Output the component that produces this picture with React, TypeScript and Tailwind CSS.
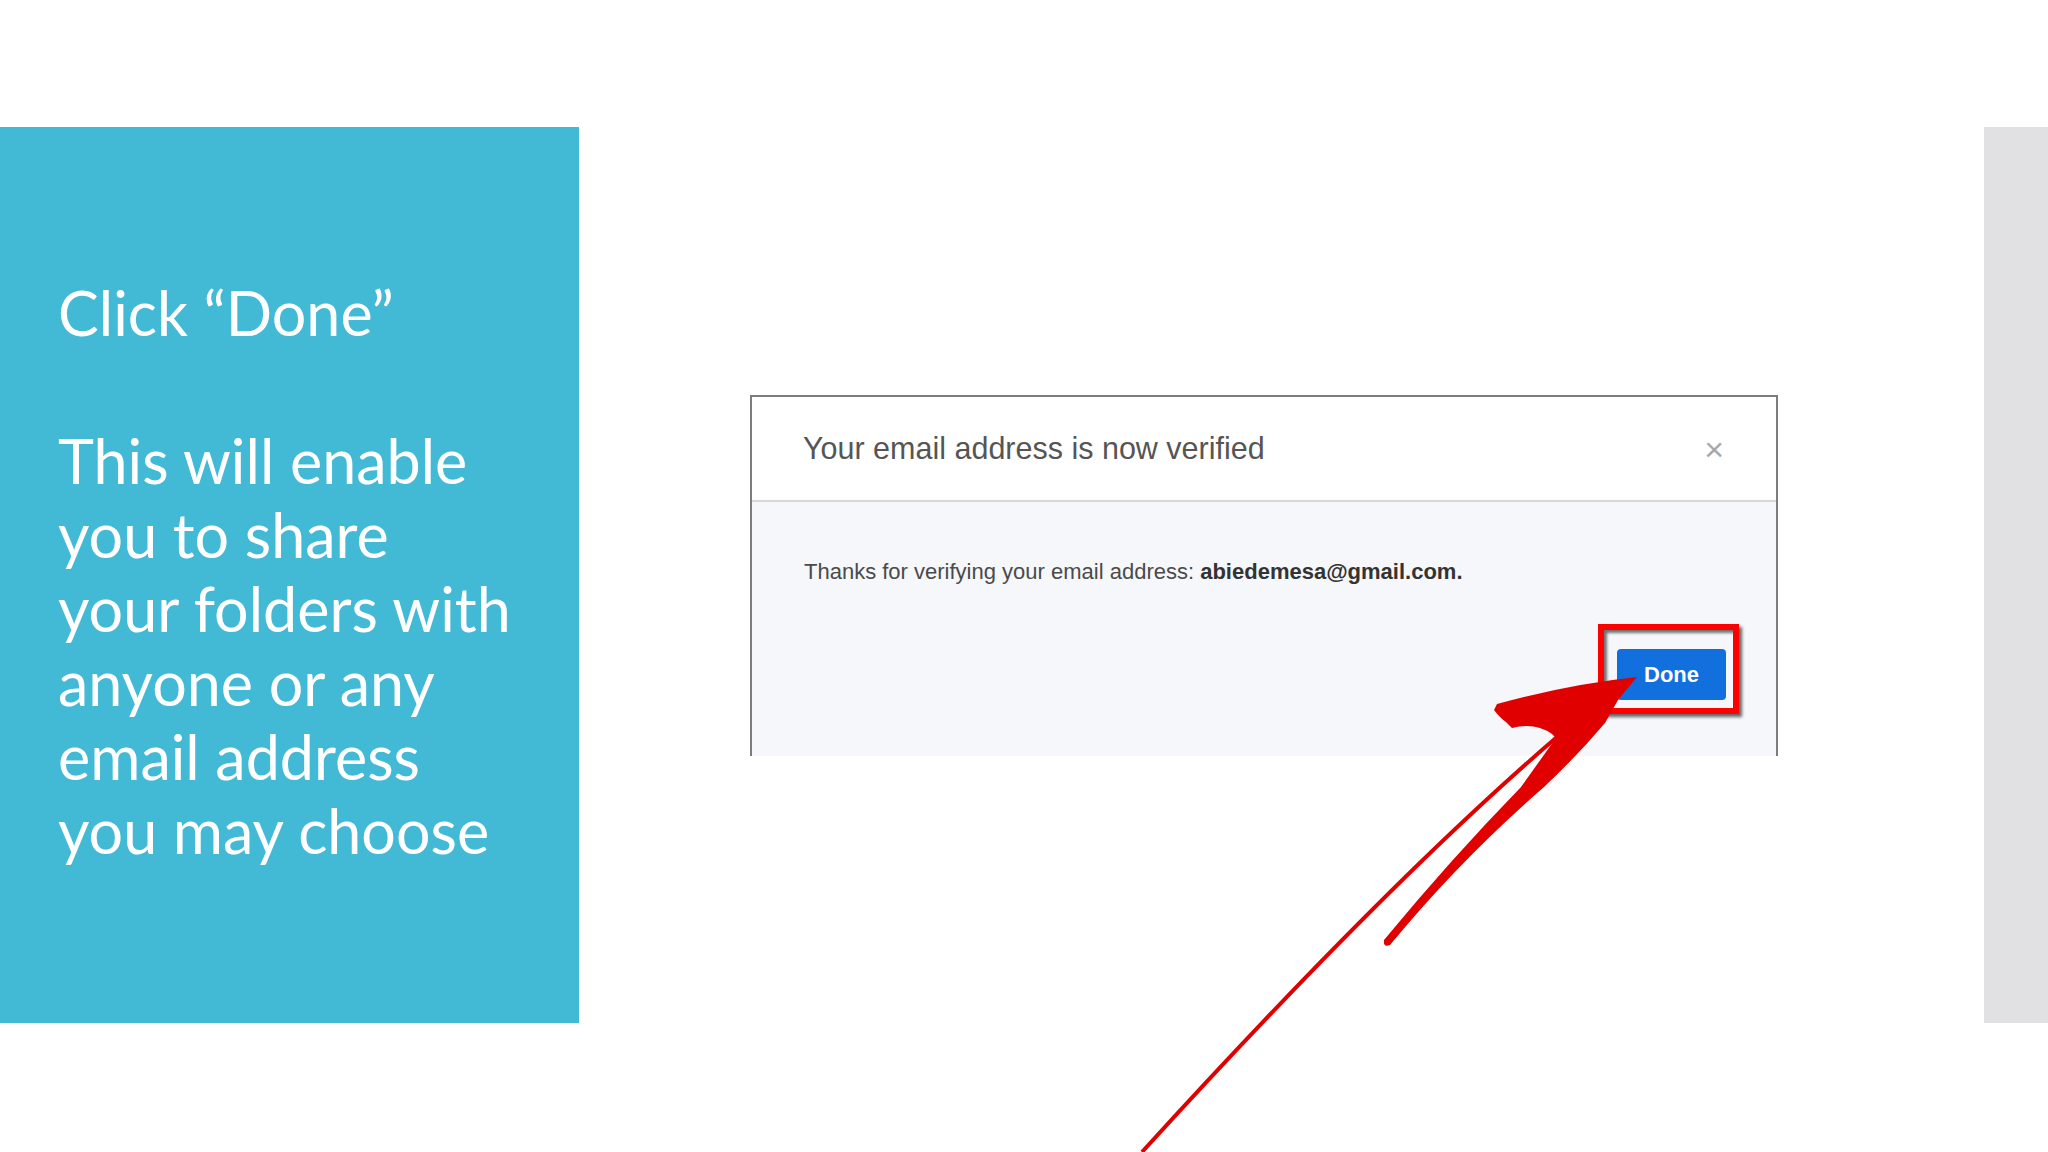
import React from "react";

const sans = { fontFamily: '"Liberation Sans", Arial, sans-serif' };

function Arrow() {
  return (
    <svg
      className="pointer-events-none absolute inset-0"
      width={2048}
      height={1152}
      viewBox="0 0 2048 1152"
    >
      <path
        d="M1637 677 Q1570 684 1497 704 L1494 710 Q1500 718 1506 722 L1512 728 Q1535 722 1552 734 L1556 738 L1521 787 Q1450 860 1384 940 Q1383 948 1390 945 Q1460 860 1544 787 Q1578 755 1605 723 L1618 700 Z"
        fill="#e00000"
      />
      <path d="M1557 737 Q1390 880 1142 1152" stroke="#e00000" strokeWidth={4} fill="none" />
    </svg>
  );
}

export default function App() {
  return (
    <div className="relative w-[2048px] h-[1152px] overflow-hidden bg-white">
      <div className="h-[127px]" />
      <div className="flex h-[896px]">
        <div
          className="w-[579px] shrink-0 bg-[#42b9d5] pt-[149px] pl-[58px] text-white text-[61px] leading-[74px]"
          style={{ fontFamily: "Lato, 'Open Sans', sans-serif" }}
        >
          <div>Click “Done”</div>
          <div className="h-[74px]" />
          <div>This will enable</div>
          <div>you to share</div>
          <div>your folders with</div>
          <div>anyone or any</div>
          <div>email address</div>
          <div>you may choose</div>
        </div>

        <div className="flex-1 pl-[171px] pt-[268px]">
          <div className="w-[1028px] border-x-2 border-t-2 border-[#7d7d7d]" style={sans}>
            <div className="h-[103px] flex items-center justify-between pl-[51px] pr-[52px] bg-white">
              <span className="text-[30.5px] text-[#555]">Your email address is now verified</span>
              <span className="text-[34px] text-[#a8a8a8] leading-none font-light">×</span>
            </div>
            <div className="h-[2px] bg-[#d6d6d6]" />
            <div className="bg-[#f5f7fa] pt-[56px] pl-[52px] pr-[50px] pb-[56px]">
              <p className="text-[22px] leading-[28px] text-[#4a4a4a]">
                Thanks for verifying your email address:{" "}
                <span className="font-bold text-[#333]">abiedemesa@gmail.com.</span>
              </p>
              <div className="mt-[63px] flex justify-end">
                <div className="relative">
                  <button className="w-[109px] h-[51px] rounded-[4px] bg-[#1170de] text-white font-bold text-[22px]">
                    Done
                  </button>
                  <div className="absolute left-[-19px] top-[-25px] w-[141px] h-[90px] border-[6px] border-[#ff0000] shadow-[3px_3px_3px_rgba(0,0,0,0.6),inset_3px_3px_3px_rgba(0,0,0,0.55)]" />
                </div>
              </div>
            </div>
          </div>
        </div>

        <div className="w-[64px] shrink-0 bg-[#e1e1e3]" />
      </div>
      <Arrow />
    </div>
  );
}
